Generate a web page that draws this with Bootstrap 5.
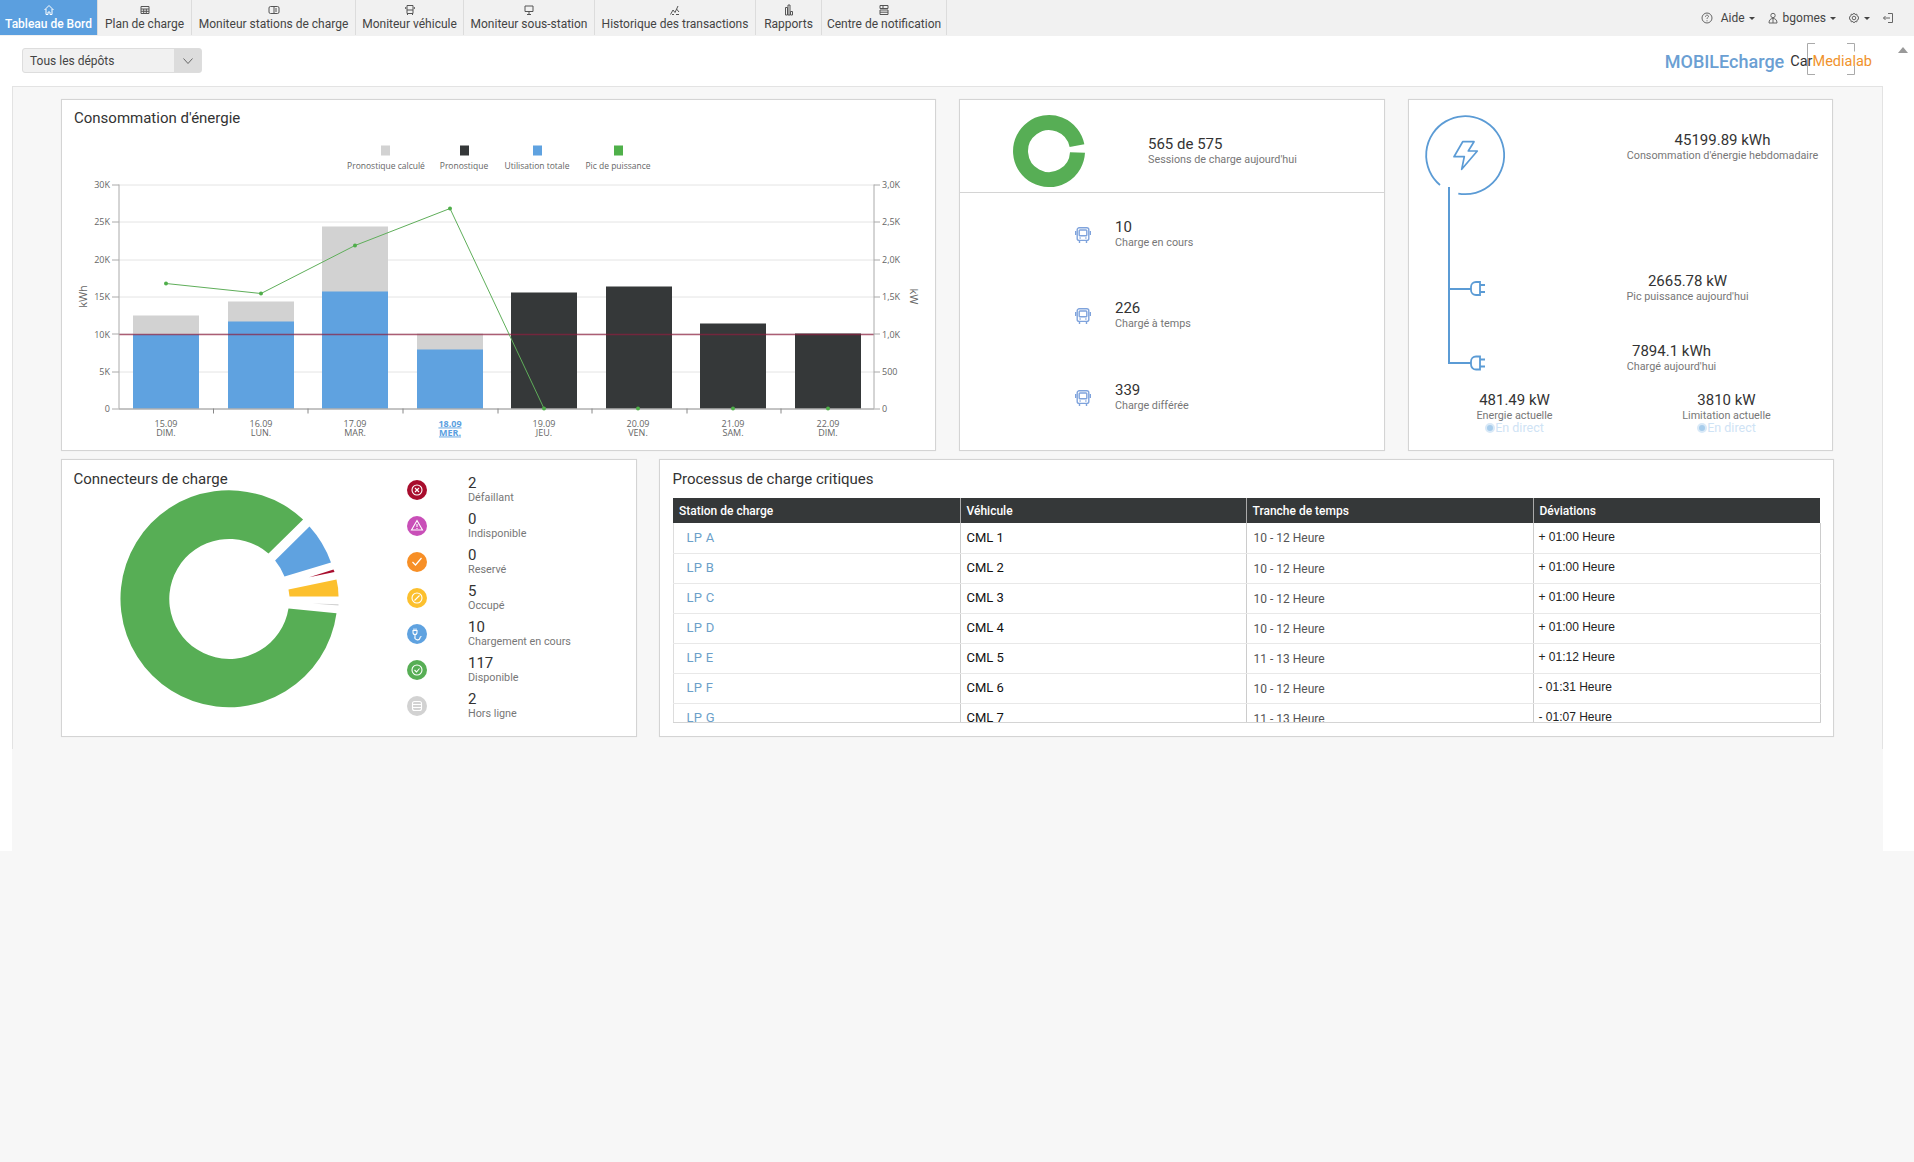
<!DOCTYPE html>
<html lang="fr">
<head>
<meta charset="utf-8">
<title>Tableau de Bord</title>
<link href="https://cdn.jsdelivr.net/npm/bootstrap@5.3.0/dist/css/bootstrap.min.css" rel="stylesheet">
<style>
html,body{height:100%;margin:0;background:#f7f7f7;font-family:Roboto,"Liberation Sans",sans-serif;color:#333;overflow:hidden}
.topbar{height:36px;background:#f1f1f1}
.tabitem{height:35px;border-right:1px solid #dcdcdc;font-size:12px;line-height:14px;color:#444;padding:3px 0 0;text-align:center;text-decoration:none;white-space:nowrap;flex:none}
.tabitem svg{display:block;margin:1px auto 1px;width:12px;height:12px;stroke:#555;fill:none;stroke-width:1}
.tabitem.tab-on{background:#5b9fdf;color:#fff;font-weight:500}
.tabitem.tab-on svg{stroke:#fff}
.topright{font-size:12px;color:#444;padding-right:20px;gap:12px}
.topright svg{width:12px;height:12px;stroke:#666;fill:none;stroke-width:1}
.caret-dn{display:inline-block;border-top:3px solid #444;border-left:3px solid transparent;border-right:3px solid transparent;vertical-align:middle;margin-left:4px}
.sheet{height:815px;background:#fff;position:relative}
.headrow{height:50px;padding:12px 42px 0 22px}
.pick{width:180px;height:25px;border:1px solid #ddd;background:#f1f1f1;border-radius:3px;font-size:12px;color:#444;padding-left:7px}
.pick-arrow{width:27px;height:23px;background:#dcdcdc}
.logotype{font-size:18px;font-weight:500;color:#6b9fd3}
.logo-wrap{position:relative;margin-left:6px;font-size:14.5px;font-weight:400}
.logo-wrap svg{position:absolute;left:17px;top:-8px;width:48px;height:32px}
.logo-wrap span{position:relative}
.logo-dark{color:#333}.logo-orange{color:#f0922b}
.panel{margin:0 31px 0 12px;height:765px;background:#f7f7f7;border-top:1px solid #e3e3e3;padding:12px 0 0 49px;position:relative}
.panel::before,.panel::after{content:"";position:absolute;top:0;height:662px;width:1px;background:#e3e3e3}
.panel::before{left:0}.panel::after{right:0}
.boxcard{background:#fff;border:1px solid #d4d4d4;box-shadow:0 0 1px rgba(0,0,0,.08);flex:none}
.row-one{height:352px}
.row-two{height:278px;margin-top:8px}
.box-chart{width:875px;position:relative}
.box-sessions{width:425.5px;margin-left:23px}
.box-energy{width:425.5px;margin-left:23px;position:relative}
.box-conn{width:575.5px;position:relative}
.box-crit{width:1174.5px;margin-left:22.5px;padding:10px 12px 0 12.5px}
.boxtitle{font-size:15px;font-weight:400;color:#333;line-height:18px}
.num{font-size:15px;line-height:17px;color:#333}
.cap{font-size:10.8px;line-height:13px;color:#777;white-space:nowrap}
.sess-top{height:93px;border-bottom:1px solid #d4d4d4;padding:10px 0 0 52px}
.sess-top svg{width:74px;height:74px;flex:none}
.sess-text{margin-left:62px}
.sess-list{padding:25.500px 0 0 115px}
.sess-row{height:81.500px;gap:24px;align-items:flex-start}
.sess-row svg{width:16px;height:17px;margin-top:8px;flex:none}
.energy-svg{position:absolute;left:10px;top:14px;width:90px;height:280px}
.estat{position:absolute;text-align:center}
.live{font-size:12.5px;line-height:13px;color:#cfe3f5;white-space:nowrap;margin-top:-1px}
.live i{display:inline-block;width:10px;height:10px;border-radius:50%;background:#a8cdec;border:2px solid #d9e9f7;vertical-align:-1px}
.conn-title{position:absolute;left:11.5px;top:10px}
.conn-svg{position:absolute;left:0;top:0;width:400px;height:276px}
.conn-list{position:absolute;left:345px;top:12px}
.conn-row{height:36px;align-items:center;width:200px}
.conn-row>svg{width:20px;height:20px;flex:none;margin-right:41px}
.conn-row .num{line-height:15px}
.conn-row>div{margin-top:-1px}
.crit-scroll{height:225px;overflow:hidden;border-bottom:1px solid #d4d4d4;margin-top:10px}
.crit-table{width:1148px;table-layout:fixed;border-collapse:collapse;margin:0}
.crit-table th{background:#353839;color:#fff;font-weight:500;font-size:12px;height:25px;padding:0 6px;border-right:1px solid #aaa;line-height:14px}
.crit-table th:last-child{border-right:0}
.crit-table td{height:30px;padding:0 6px;border-bottom:1px solid #e8e8e8;border-right:1px solid #ccc;vertical-align:middle;white-space:nowrap}
.crit-table tr td:first-child{border-left:1px solid #ddd}
.td-lp{font-size:13px;color:#6b9fc9;padding-left:13px!important;letter-spacing:.3px}
.td-cml{font-size:13px;color:#111}
.td-time{font-size:12px;color:#555;padding:1px 6px 0 7px!important}
.td-dev{font-family:"Liberation Sans",sans-serif;font-size:12px;color:#222;padding:0 6px 2px 5px!important}
.chartbox{position:absolute;left:0;top:0;width:874px;height:350px}
.chart-t{font-family:"Open Sans",sans-serif;font-size:9px;fill:#666}
.chart-l{font-size:8.5px}
.chart-now{fill:#5b9fdf;font-weight:700;text-decoration:underline}
</style>
</head>
<body>
<nav class="topbar d-flex justify-content-between align-items-start">
  <div class="d-flex">
    <a class="tabitem tab-on" style="width:98px" href="#"><svg viewBox="0 0 12 12"><path d="M1.500 6 6 1.500 10.500 6M3 5v5.500h2V8h2v2.500h2V5"/></svg>Tableau de Bord</a>
    <a class="tabitem" style="width:94px" href="#"><svg viewBox="0 0 12 12"><path d="M2 2.500h8v7H2zM2 5h8M2 7.300h8M4.700 5v4.500M7.300 5v4.500"/></svg>Plan de charge</a>
    <a class="tabitem" style="width:164px" href="#"><svg viewBox="0 0 12 12"><rect x="1" y="2.500" width="10" height="7" rx="1.500"/><path d="M6 2.500v7M8 4v4"/></svg>Moniteur stations de charge</a>
    <a class="tabitem" style="width:108px" href="#"><svg viewBox="0 0 12 12"><path d="M3 1.500h6v8H3zM3 6h6M1.700 3v2M10.300 3v2M3.500 9.500v1.500M8.500 9.500v1.500"/></svg>Moniteur véhicule</a>
    <a class="tabitem" style="width:131px" href="#"><svg viewBox="0 0 12 12"><path d="M2 2h8v5.500H2zM6 7.500V10M4 10.500h4"/></svg>Moniteur sous-station</a>
    <a class="tabitem" style="width:161px" href="#"><svg viewBox="0 0 12 12"><path d="M1.500 10.500 4 6l2 2.500L9 2M3 10.500h2M7 10.500h3M7.500 5 10 8"/></svg>Historique des transactions</a>
    <a class="tabitem" style="width:66px" href="#"><svg viewBox="0 0 12 12"><path d="M2.500 3.500h2V11h-2zM5 1h2v10H5zM7.500 7.500h2V11h-2z"/></svg>Rapports</a>
    <a class="tabitem" style="width:125px" href="#"><svg viewBox="0 0 12 12"><path d="M2 1.500h8v3H2zM2 6h8v4.500H2zM2 8.200h8M5 1.500v3"/></svg>Centre de notification</a>
  </div>
  <div class="topright d-flex align-items-center" style="height:35px">
    <span><svg viewBox="0 0 12 12"><circle cx="6" cy="6" r="5"/><path d="M4.500 4.700c0-2 3-2 3-.2 0 1-1.500 1-1.500 2.300M6 8.300v1"/></svg><span class="ms-2">Aide</span><span class="caret-dn"></span></span>
    <span><svg viewBox="0 0 12 12"><circle cx="6" cy="3.500" r="2.200"/><path d="M2 11c0-3 1.500-4.500 4-4.500s4 1.500 4 4.500zM6 6.500V11"/></svg><span class="ms-1">bgomes</span><span class="caret-dn"></span></span>
    <span><svg viewBox="0 0 12 12"><circle cx="6" cy="6" r="1.800"/><path d="M6 1l1 1.500 1.800-.3.300 1.800L10.800 5l-.8 1 .8 1-1.700 1-.3 1.800-1.800-.3L6 11l-1-1.500-1.800.3-.3-1.800L1.200 7 2 6l-.8-1 1.700-1 .3-1.800 1.800.3z"/></svg><span class="caret-dn"></span></span>
    <span><svg viewBox="0 0 12 12"><path d="M6 1.500h4.500v9H6M8 6H1.500M3.500 4 1.500 6l2 2"/></svg></span>
  </div>
</nav>
<main class="sheet">
  <div class="headrow d-flex justify-content-between align-items-start">
    <div class="pick d-flex justify-content-between align-items-center">Tous les dépôts
      <span class="pick-arrow d-flex align-items-center justify-content-center"><svg width="10" height="6" viewBox="0 0 10 6" fill="none" stroke="#666"><path d="M.5.500 5 5.500 9.500.500"/></svg></span>
    </div>
    <div class="d-flex align-items-center" style="margin-top:-5px;height:37px">
      <span class="logotype">MOBILEcharge</span>
      <span class="logo-wrap"><svg viewBox="0 0 48 32" fill="none" stroke="#aaa" stroke-width="1"><path d="M8 .500H.500v31H8M40 .500h7.500v8M47.500 23v8.500H40"/></svg><span class="logo-dark">Car</span><span class="logo-orange">Medialab</span></span>
    </div>
  </div>
  <svg class="position-absolute" style="right:6px;top:11px" width="10" height="6" viewBox="0 0 10 6"><path d="M0 6 5 0l5 6z" fill="#999"/></svg>
  <div class="panel">
    <div class="d-flex row-one">
      <section class="boxcard box-chart">
        <svg class="chartbox" viewBox="62 99.500 874 350">
          <text x="74" y="122.500" font-family="Roboto" font-size="15" fill="#333">Consommation d'énergie</text>
          <g class="chart-t chart-l" text-anchor="middle">
            <rect x="381" y="145" width="9" height="10" fill="#d2d2d2"/><text x="386" y="168">Pronostique calculé</text>
            <rect x="460" y="145" width="9" height="10" fill="#353839"/><text x="464" y="168">Pronostique</text>
            <rect x="533" y="145" width="9" height="10" fill="#5fa2e0"/><text x="537" y="168">Utilisation totale</text>
            <rect x="614" y="145" width="9" height="10" fill="#4fb04a"/><text x="618" y="168">Pic de puissance</text>
          </g>
          <g stroke="#e4e4e4" stroke-width="1">
            <path d="M119 184.500H874M119 221.500H874M119 259.500H874M119 296.500H874M119 333.500H874M119 371.500H874"/>
          </g>
          <g fill="#d2d2d2">
            <rect x="133" y="315" width="66" height="20"/><rect x="228" y="301" width="66" height="21"/><rect x="322" y="226" width="66" height="66"/><rect x="417" y="333" width="66" height="17"/>
          </g>
          <g fill="#5fa2e0">
            <rect x="133" y="334" width="66" height="74"/><rect x="228" y="321" width="66" height="87"/><rect x="322" y="291" width="66" height="117"/><rect x="417" y="349" width="66" height="59"/>
          </g>
          <g fill="#353839">
            <rect x="511" y="292" width="66" height="116"/><rect x="606" y="286" width="66" height="122"/><rect x="700" y="323" width="66" height="85"/><rect x="795" y="333" width="66" height="75"/>
          </g>
          <path d="M119 334H874" stroke="#8d1f3f" stroke-opacity=".7" stroke-width="1.500"/>
          <path d="M119 184V408M874 184V408M112 184.500h7M112 221.500h7M112 259.500h7M112 296.500h7M112 333.500h7M112 371.500h7M112 408.500h7M874 184.500h6M874 221.500h6M874 259.500h6M874 296.500h6M874 333.500h6M874 371.500h6M874 408.500h6" stroke="#aaa" fill="none"/>
          <path d="M119 408.500H874M213.500 408v5M308 408v5M403 408v5M498 408v5M592 408v5M687 408v5M781 408v5" stroke="#888" fill="none"/>
          <polyline points="166,283 261,293 355,245 450,208 544,408" fill="none" stroke="#5fae5a" stroke-width="1"/>
          <g fill="#4fae4a"><circle cx="166" cy="283" r="2"/><circle cx="261" cy="293" r="2"/><circle cx="355" cy="245" r="2"/><circle cx="450" cy="208" r="2"/><circle cx="544" cy="408" r="2"/><circle cx="638" cy="408" r="2"/><circle cx="733" cy="408" r="2"/><circle cx="828" cy="408" r="2"/></g>
          <g class="chart-t" text-anchor="end">
            <text x="110" y="187">30K</text><text x="110" y="224">25K</text><text x="110" y="262">20K</text><text x="110" y="299">15K</text><text x="110" y="337">10K</text><text x="110" y="374">5K</text><text x="110" y="411">0</text>
          </g>
          <g class="chart-t">
            <text x="882" y="187">3,0K</text><text x="882" y="224">2,5K</text><text x="882" y="262">2,0K</text><text x="882" y="299">1,5K</text><text x="882" y="337">1,0K</text><text x="882" y="374">500</text><text x="882" y="411">0</text>
          </g>
          <text transform="translate(87 296) rotate(-90)" text-anchor="middle" font-family="Open Sans" font-size="11" fill="#666">kWh</text>
          <text transform="translate(910 296) rotate(90)" text-anchor="middle" font-family="Open Sans" font-size="11" fill="#666">kW</text>
          <g class="chart-t" text-anchor="middle">
            <text x="166" y="426">15.09<tspan x="166" dy="9">DIM.</tspan></text>
            <text x="261" y="426">16.09<tspan x="261" dy="9">LUN.</tspan></text>
            <text x="355" y="426">17.09<tspan x="355" dy="9">MAR.</tspan></text>
            <text x="450" y="426" class="chart-now">18.09<tspan x="450" dy="9">MER.</tspan></text>
            <text x="544" y="426">19.09<tspan x="544" dy="9">JEU.</tspan></text>
            <text x="638" y="426">20.09<tspan x="638" dy="9">VEN.</tspan></text>
            <text x="733" y="426">21.09<tspan x="733" dy="9">SAM.</tspan></text>
            <text x="828" y="426">22.09<tspan x="828" dy="9">DIM.</tspan></text>
          </g>
        </svg>
      </section>
      <section class="boxcard box-sessions">
        <div class="sess-top d-flex align-items-center">
          <svg viewBox="0 0 74 74"><path d="M 65.500 38.500 A 28.500 28.500 0 1 1 65 31.600" fill="none" stroke="#57ae55" stroke-width="15"/></svg>
          <div class="sess-text"><div class="num">565 de 575</div><div class="cap">Sessions de charge aujourd'hui</div></div>
        </div>
        <div class="sess-list">
          <div class="sess-row d-flex"><svg viewBox="0 0 16 17" fill="none" stroke="#7fa3dc" stroke-width="1.400"><rect x="2.200" y=".8" width="11.600" height="12.600" rx="2"/><rect x="4.200" y="3" width="7.600" height="5.800" rx=".8"/><path d="M.7 4v4M15.300 4v4M4.500 13.500v2.500M11.500 13.500v2.500M4.500 11h1.200M10.300 11h1.200"/></svg><div><div class="num">10</div><div class="cap">Charge en cours</div></div></div>
          <div class="sess-row d-flex"><svg viewBox="0 0 16 17" fill="none" stroke="#7fa3dc" stroke-width="1.400"><rect x="2.200" y=".8" width="11.600" height="12.600" rx="2"/><rect x="4.200" y="3" width="7.600" height="5.800" rx=".8"/><path d="M.7 4v4M15.300 4v4M4.500 13.500v2.500M11.500 13.500v2.500M4.500 11h1.200M10.300 11h1.200"/></svg><div><div class="num">226</div><div class="cap">Chargé à temps</div></div></div>
          <div class="sess-row d-flex"><svg viewBox="0 0 16 17" fill="none" stroke="#7fa3dc" stroke-width="1.400"><rect x="2.200" y=".8" width="11.600" height="12.600" rx="2"/><rect x="4.200" y="3" width="7.600" height="5.800" rx=".8"/><path d="M.7 4v4M15.300 4v4M4.500 13.500v2.500M11.500 13.500v2.500M4.500 11h1.200M10.300 11h1.200"/></svg><div><div class="num">339</div><div class="cap">Charge différée</div></div></div>
        </div>
      </section>
      <section class="boxcard box-energy">
        <svg class="energy-svg" viewBox="0 0 90 280" fill="none" stroke="#5b9bd5" stroke-width="1.800">
          <path d="M21 71A39 39 0 1 1 39.300 79.600"/>
          <path d="M30 73V249H52M30 175H52" stroke-width="2"/>
          <path d="M61 168h-4a5 5 0 0 0-5 5v3a5 5 0 0 0 5 5h4zM61 171h5M61 178h5"/>
          <path d="M61 242.500h-4a5 5 0 0 0-5 5v3a5 5 0 0 0 5 5h4zM61 245.500h5M61 252.500h5"/>
          <path d="M43.700 27.700H55L49.300 37H58.300L42.700 55.300 45.300 42.700H35z" stroke-linejoin="round" stroke-width="1.700"/>
        </svg>
        <div class="estat" style="left:218px;top:32px;width:192px"><div class="num">45199.89 kWh</div><div class="cap">Consommation d'énergie hebdomadaire</div></div>
        <div class="estat" style="left:218px;top:173px;width:122px"><div class="num">2665.78 kW</div><div class="cap">Pic puissance aujourd'hui</div></div>
        <div class="estat" style="left:218px;top:243px;width:90px"><div class="num">7894.1 kWh</div><div class="cap">Chargé aujourd'hui</div></div>
        <div class="estat" style="left:56px;top:292px;width:100px"><div class="num">481.49 kW</div><div class="cap">Energie actuelle</div><div class="live"><i></i>En direct</div></div>
        <div class="estat" style="left:268px;top:292px;width:100px"><div class="num">3810 kW</div><div class="cap">Limitation actuelle</div><div class="live"><i></i>En direct</div></div>
      </section>
    </div>
    <div class="d-flex row-two">
      <section class="boxcard box-conn">
        <svg class="conn-svg" viewBox="61.500 459.500 400 276">
          <path d="M336 612.700A108.500 108.500 0 1 1 302.600 519L268 553A60 60 0 1 0 288 608Z" fill="#57ae55"/>
          <path d="M274.600 560 309 526A108 108 0 0 1 330.500 562L284 576A60 60 0 0 0 274.600 560Z" fill="#5fa2e0"/>
          <path d="M308.700 576.700 333 569 334 571.500Z" fill="#a80d2d"/>
          <path d="M288 589 336 579Q338 587 338 596L289 596Z" fill="#fcc02e"/>
          <path d="M312 603 338 603.700V605Z" fill="#d0d0d0"/>
        </svg>
        <div class="boxtitle conn-title">Connecteurs de charge</div>
        <div class="conn-list">
          <div class="conn-row d-flex"><svg viewBox="0 0 20 20"><circle cx="10" cy="10" r="10" fill="#a80d2d"/><g fill="none" stroke="#fff" stroke-width="1.100"><circle cx="10" cy="10" r="5"/><path d="M8 8l4 4M12 8l-4 4"/></g></svg><div><div class="num">2</div><div class="cap">Défaillant</div></div></div>
          <div class="conn-row d-flex"><svg viewBox="0 0 20 20"><circle cx="10" cy="10" r="10" fill="#c94fb8"/><g fill="none" stroke="#fff" stroke-width="1.100"><path d="M10 4.500l5.500 9.500h-11zM10 8v3M10 12v1"/></g></svg><div><div class="num">0</div><div class="cap">Indisponible</div></div></div>
          <div class="conn-row d-flex"><svg viewBox="0 0 20 20"><circle cx="10" cy="10" r="10" fill="#f78f26"/><g fill="none" stroke="#fff" stroke-width="1.200"><path d="M5.500 10l3 3 6-7"/></g></svg><div><div class="num">0</div><div class="cap">Reservé</div></div></div>
          <div class="conn-row d-flex"><svg viewBox="0 0 20 20"><circle cx="10" cy="10" r="10" fill="#fcc02e"/><g fill="none" stroke="#fff" stroke-width="1.100"><circle cx="10" cy="10" r="5"/><path d="M7.500 12.500l5-5"/></g></svg><div><div class="num">5</div><div class="cap">Occupé</div></div></div>
          <div class="conn-row d-flex"><svg viewBox="0 0 20 20"><circle cx="10" cy="10" r="10" fill="#5fa2e0"/><g fill="none" stroke="#fff" stroke-width="1.100"><path d="M6 6.500h4v2a2 2 0 0 1-4 0zM7 4.500v2M9 4.500v2M8 10.500v2a2.500 2.500 0 0 0 5 1.500c0-1 .5-1.500 1.500-1.500"/></g></svg><div><div class="num">10</div><div class="cap">Chargement en cours</div></div></div>
          <div class="conn-row d-flex"><svg viewBox="0 0 20 20"><circle cx="10" cy="10" r="10" fill="#57ae55"/><g fill="none" stroke="#fff" stroke-width="1.100"><circle cx="10" cy="10" r="5"/><path d="M7.500 10l2 2 3-3.500"/></g></svg><div><div class="num">117</div><div class="cap">Disponible</div></div></div>
          <div class="conn-row d-flex"><svg viewBox="0 0 20 20"><circle cx="10" cy="10" r="10" fill="#d2d2d2"/><g fill="none" stroke="#fff" stroke-width="1.100"><rect x="5.500" y="5.500" width="9" height="9" rx="2"/><path d="M5.500 8.500h9M5.500 11.500h9"/></g></svg><div><div class="num">2</div><div class="cap">Hors ligne</div></div></div>
        </div>
      </section>
      <section class="boxcard box-crit">
        <div class="boxtitle">Processus de charge critiques</div>
        <div class="crit-scroll">
          <table class="crit-table">
            <colgroup><col style="width:287px"><col style="width:286px"><col style="width:287px"><col></colgroup>
            <thead><tr><th>Station de charge</th><th>Véhicule</th><th>Tranche de temps</th><th>Déviations</th></tr></thead>
            <tbody>
              <tr><td class="td-lp">LP A</td><td class="td-cml">CML 1</td><td class="td-time">10 - 12 Heure</td><td class="td-dev">+ 01:00 Heure</td></tr>
              <tr><td class="td-lp">LP B</td><td class="td-cml">CML 2</td><td class="td-time">10 - 12 Heure</td><td class="td-dev">+ 01:00 Heure</td></tr>
              <tr><td class="td-lp">LP C</td><td class="td-cml">CML 3</td><td class="td-time">10 - 12 Heure</td><td class="td-dev">+ 01:00 Heure</td></tr>
              <tr><td class="td-lp">LP D</td><td class="td-cml">CML 4</td><td class="td-time">10 - 12 Heure</td><td class="td-dev">+ 01:00 Heure</td></tr>
              <tr><td class="td-lp">LP E</td><td class="td-cml">CML 5</td><td class="td-time">11 - 13 Heure</td><td class="td-dev">+ 01:12 Heure</td></tr>
              <tr><td class="td-lp">LP F</td><td class="td-cml">CML 6</td><td class="td-time">10 - 12 Heure</td><td class="td-dev">- 01:31 Heure</td></tr>
              <tr><td class="td-lp">LP G</td><td class="td-cml">CML 7</td><td class="td-time">11 - 13 Heure</td><td class="td-dev">- 01:07 Heure</td></tr>
            </tbody>
          </table>
        </div>
      </section>
    </div>
  </div>
</main>
<script src="https://cdn.jsdelivr.net/npm/bootstrap@5.3.0/dist/js/bootstrap.bundle.min.js"></script>
</body>
</html>
